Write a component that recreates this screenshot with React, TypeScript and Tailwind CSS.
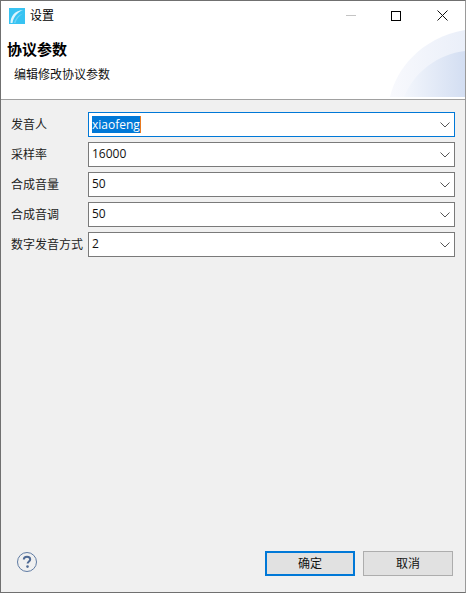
const font = { fontFamily: '"Open Sans", "Noto Sans CJK SC", sans-serif' }

const fields = [
  { label: '发音人', value: 'xiaofeng', focused: true },
  { label: '采样率', value: '16000' },
  { label: '合成音量', value: '50' },
  { label: '合成音调', value: '50' },
  { label: '数字发音方式', value: '2' },
]

function AppLogo() {
  return (
    <svg width="16" height="16" viewBox="0 0 16 16" className="shrink-0">
      <rect width="16" height="16" fill="#38c3f2" />
      <path d="M1.5 15C1.5 9 5 2.5 14 2C8 4.5 4.5 9 3.5 15Z" fill="#dff5fd" />
      <path d="M5 15C6 11 9 7 14 5.5C10 8 7.5 11 6.5 15Z" fill="#6fd3f5" />
    </svg>
  )
}

function TitleBar() {
  return (
    <div className="flex h-[29px] items-center pl-[8px]">
      <AppLogo />
      <span className="ml-[5px] text-[12px] text-black">设置</span>
      <div className="ml-auto flex items-center">
        <div className="flex h-[29px] w-[46px] items-center justify-center">
          <div className="h-px w-[10px] bg-[#c4c4c4]" />
        </div>
        <div className="flex h-[29px] w-[46px] items-center justify-center pr-[2px]">
          <div className="size-[10px] border border-black" />
        </div>
        <div className="flex h-[29px] w-[45px] items-center justify-center">
          <svg width="11" height="11" viewBox="0 0 11 11">
            <path d="M0.5 0.5L10.5 10.5M10.5 0.5L0.5 10.5" stroke="#111" strokeWidth="1" fill="none" />
          </svg>
        </div>
      </div>
    </div>
  )
}

function Banner() {
  return (
    <div className="relative h-[69px] bg-white pl-[6px] pt-[8px]">
      <h1 className="text-[15px] leading-[22px] font-bold text-black">协议参数</h1>
      <p className="mt-[6px] pl-[7px] text-[12px] leading-[18px] text-[#111]">编辑修改协议参数</p>
      <svg width="75" height="67" viewBox="0 0 75 67" className="absolute right-0 top-0">
        <defs>
          <linearGradient id="outer" x1="0" y1="0" x2="1" y2="0">
            <stop offset="0" stopColor="#f8f9fd" />
            <stop offset="1" stopColor="#eaeff9" />
          </linearGradient>
          <linearGradient id="inner" x1="0" y1="0" x2="1" y2="0">
            <stop offset="0" stopColor="#f3f6fc" />
            <stop offset="1" stopColor="#d3def2" />
          </linearGradient>
        </defs>
        <path d="M0 67C6 40 30 8 75 0V67Z" fill="url(#outer)" />
        <path d="M14 67C24 42 48 24 75 21V67Z" fill="url(#inner)" />
      </svg>
    </div>
  )
}

function Field({ label, value, focused }: { label: string; value: string; focused?: boolean }) {
  return (
    <div className="flex h-[25px] items-center">
      <span className="w-[77px] shrink-0 whitespace-nowrap text-[12px] text-[#222]">{label}</span>
      <div
        className={`flex h-[25px] min-w-0 flex-1 items-center bg-white pl-[3px] pr-[4px] text-[12px] text-[#111] ${
          focused ? 'border border-[#0078d7]' : 'border border-[#7a7a7a]'
        }`}
      >
        {focused ? (
          <span className="border-r border-[#e87a20] bg-[#0078d7] leading-[17px] text-white">{value}</span>
        ) : (
          <span className="pb-[1px]">{value}</span>
        )}
        <svg width="10" height="6" viewBox="0 0 10 6" className="ml-auto">
          <path d="M0.5 0.5L5 5L9.5 0.5" stroke="#555" strokeWidth="1" fill="none" />
        </svg>
      </div>
    </div>
  )
}

export default function App() {
  return (
    <div
      className="flex h-[593px] w-[466px] flex-col border-t border-l border-r border-b border-t-[#707070] border-l-[#707070] border-r-[#9a9a9a] border-b-[#707070] bg-[#f0f0f0]"
      style={font}
    >
      <div className="bg-white">
        <TitleBar />
        <Banner />
      </div>
      <div className="h-px bg-[#a0a0a0]" />

      <div className="flex flex-col gap-[5px] pl-[10px] pr-[10px] pt-[12px]">
        {fields.map((f) => (
          <Field key={f.label} label={f.label} value={f.value} focused={f.focused} />
        ))}
      </div>

      <div className="mt-auto flex items-start pb-[16px] pl-[16px] pr-[12px]">
        <svg width="20" height="20" viewBox="0 0 20 20" className="mt-px">
          <circle cx="10" cy="10" r="9.5" fill="none" stroke="#5f7ba3" strokeWidth="1" />
          <path
            d="M6.8 7.6C6.8 5.8 8.2 4.8 10 4.8C11.9 4.8 13.2 5.9 13.2 7.4C13.2 9.4 10.6 9.6 10.6 11.6"
            fill="none"
            stroke="#4f6a94"
            strokeWidth="2"
          />
          <circle cx="10.5" cy="14.6" r="1.3" fill="#4f6a94" />
        </svg>
        <button className="ml-auto h-[25px] w-[90px] border-2 border-[#0078d7] bg-[#e1e1e1] text-[12px] text-[#111]">
          确定
        </button>
        <button className="ml-[8px] h-[25px] w-[90px] border border-[#adadad] bg-[#e1e1e1] text-[12px] text-[#111]">
          取消
        </button>
      </div>
    </div>
  )
}
